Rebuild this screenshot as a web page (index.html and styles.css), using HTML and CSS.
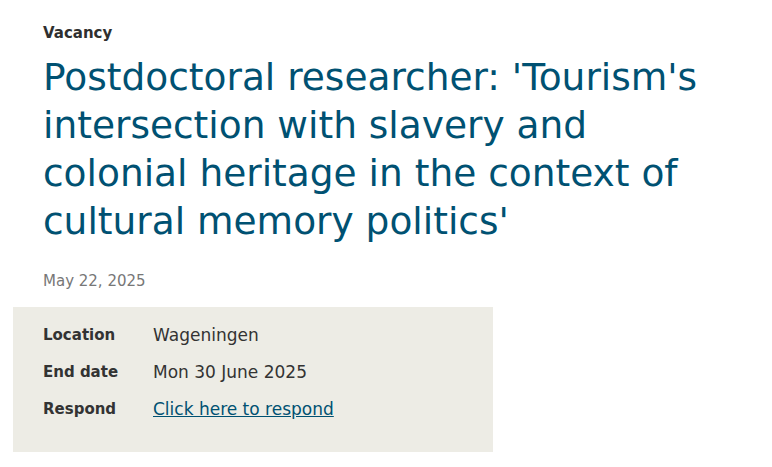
FILE: index.html
```html
<!DOCTYPE html>
<html lang="en">
<head>
<meta charset="utf-8">
<link rel="stylesheet" href="styles.css">
</head>
<body>
<main class="page">
  <div class="intro">
    <p class="kicker">Vacancy</p>
    <h1 class="title">Postdoctoral researcher: 'Tourism's intersection with slavery and colonial heritage in the context of cultural memory politics'</h1>
    <p class="date">May 22, 2025</p>
  </div>
  <dl class="facts">
    <div class="fact"><dt>Location</dt><dd>Wageningen</dd></div>
    <div class="fact"><dt>End date</dt><dd>Mon 30 June 2025</dd></div>
    <div class="fact"><dt>Respond</dt><dd><a href="#">Click here to respond</a></dd></div>
  </dl>
</main>
</body>
</html>
```
FILE: styles.css
```css
html, body {
  margin: 0;
  padding: 0;
  background: #fff;
}
body {
  font-family: "DejaVu Sans", Verdana, sans-serif;
  color: #333;
}
.page {
  padding: 0 13px;
}
.intro {
  padding: 0 30px;
}
.kicker {
  margin: 0;
  padding-top: 24px;
  font-size: 15px;
  font-weight: bold;
  line-height: 18px;
  color: #2f2f2f;
}
.title {
  margin: 11px 0 0;
  width: 680px;
  font-size: 37.5px;
  font-weight: normal;
  line-height: 48px;
  color: #005172;
}
.date {
  margin: 27px 0 0;
  font-size: 15px;
  line-height: 18px;
  color: #777;
}
.facts {
  margin: 17px 0 0;
  width: 420px;
  padding: 9px 30px 25px;
  background: #edece5;
}
.fact {
  display: flex;
  height: 37px;
  align-items: center;
}
dt {
  width: 110px;
  font-size: 15px;
  font-weight: bold;
  color: #333;
}
dd {
  margin: 0;
  font-size: 17px;
  color: #333;
}
dd a {
  color: #005172;
}
```
